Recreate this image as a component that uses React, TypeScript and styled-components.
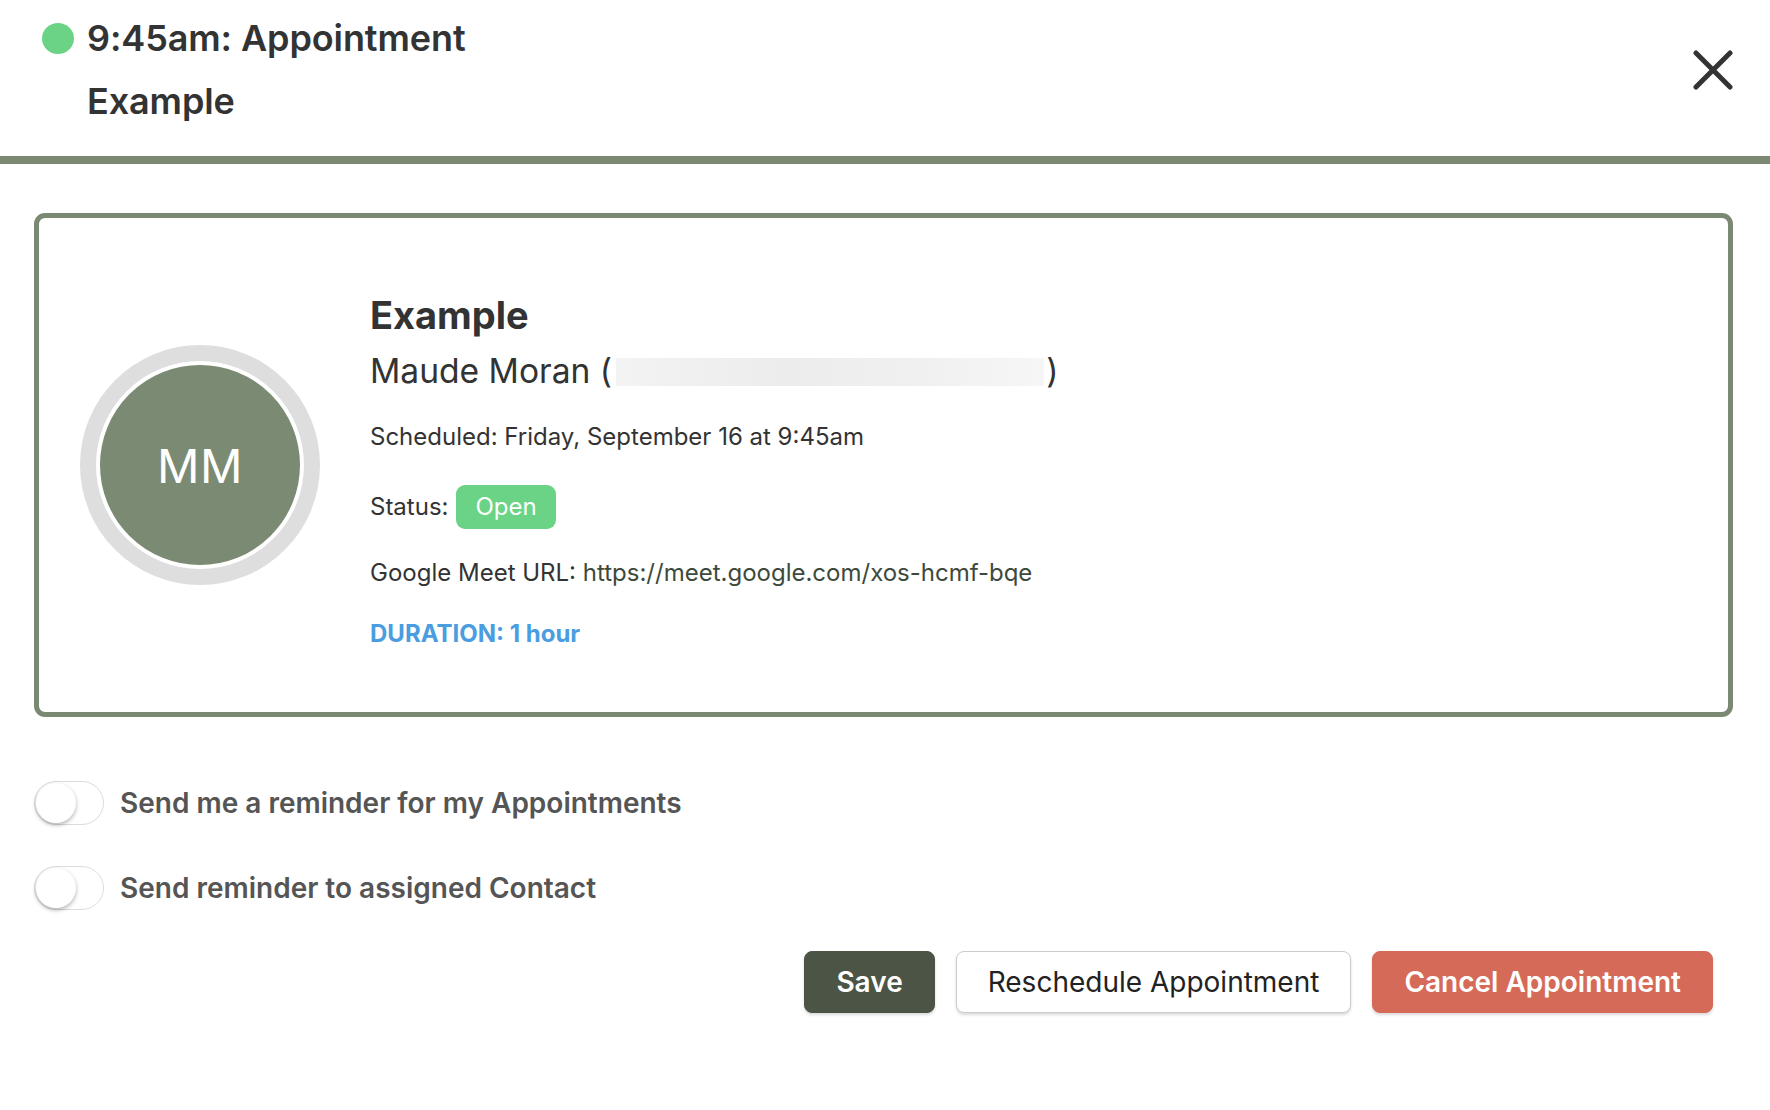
import React from "react";
import styled, { createGlobalStyle } from "styled-components";

const GlobalStyle = createGlobalStyle`
  html, body {
    margin: 0;
    padding: 0;
    background: #ffffff;
  }
  body {
    font-family: Inter, "Noto Sans", "Liberation Sans", sans-serif;
    color: #333333;
  }
`;

const sage = "#7b8872";

export default function App() {
  const [remindMe, setRemindMe] = React.useState(false);
  const [remindContact, setRemindContact] = React.useState(false);

  return (
    <>
      <GlobalStyle />
      <Page>
        <Header>
          <TitleRow>
            <StatusDot />
            <Title>
              9:45am: Appointment
              <br />
              Example
            </Title>
          </TitleRow>
          <CloseButton aria-label="Close">
            <svg width="40" height="40" viewBox="0 0 40 40" fill="none">
              <path
                d="M3 3L37 37M37 3L3 37"
                stroke="#333"
                strokeWidth="5"
                strokeLinecap="round"
              />
            </svg>
          </CloseButton>
        </Header>
        <Divider />

        <Body>
          <Card>
            <AvatarRing>
              <Avatar>MM</Avatar>
            </AvatarRing>
            <Details>
              <CardTitle>Example</CardTitle>
              <ContactName>
                Maude Moran (<Redacted />)
              </ContactName>
              <InfoLine $gap={31}>Scheduled: Friday, September 16 at 9:45am</InfoLine>
              <StatusRow>
                Status: <Badge>Open</Badge>
              </StatusRow>
              <InfoLine $gap={29}>
                Google Meet URL:{" "}
                <MeetLink href="#">https://meet.google.com/xos-hcmf-bqe</MeetLink>
              </InfoLine>
              <Duration>DURATION: 1 hour</Duration>
            </Details>
          </Card>

          <Options>
            <OptionRow>
              <Toggle $on={remindMe} onClick={() => setRemindMe(!remindMe)}>
                <Knob $on={remindMe} />
              </Toggle>
              <OptionLabel>Send me a reminder for my Appointments</OptionLabel>
            </OptionRow>
            <OptionRow>
              <Toggle $on={remindContact} onClick={() => setRemindContact(!remindContact)}>
                <Knob $on={remindContact} />
              </Toggle>
              <OptionLabel>Send reminder to assigned Contact</OptionLabel>
            </OptionRow>
          </Options>

          <Actions>
            <ActionButton $variant="primary">Save</ActionButton>
            <ActionButton $variant="outline">Reschedule Appointment</ActionButton>
            <ActionButton $variant="danger">Cancel Appointment</ActionButton>
          </Actions>
        </Body>
      </Page>
    </>
  );
}

const Page = styled.div`
  width: 1770px;
  min-height: 1110px;
  background: #fff;
`;

const Header = styled.header`
  display: flex;
  justify-content: space-between;
  align-items: flex-start;
  padding: 7px 37px 23px 42px;
`;

const TitleRow = styled.div`
  display: flex;
  align-items: flex-start;
  gap: 13px;
`;

const StatusDot = styled.span`
  flex: none;
  width: 32px;
  height: 31px;
  margin-top: 16px;
  border-radius: 50%;
  background: #6bd386;
`;

const Title = styled.h1`
  margin: 0;
  font-size: 36px;
  line-height: 63px;
  font-weight: 600;
  color: #333;
  letter-spacing: -0.1px;
`;

const CloseButton = styled.button`
  margin-top: 43px;
  padding: 0;
  border: none;
  background: none;
  cursor: pointer;
  display: flex;
`;

const Divider = styled.div`
  height: 8px;
  background: ${sage};
`;

const Body = styled.main`
  padding: 49px 37px 0 34px;
`;

const Card = styled.section`
  display: flex;
  align-items: center;
  gap: 50px;
  padding: 75px 40px 63px 41px;
  border: 5px solid ${sage};
  border-radius: 11px;
`;

const AvatarRing = styled.div`
  flex: none;
  width: 240px;
  height: 240px;
  margin-bottom: 12px;
  border-radius: 50%;
  background: #dedede;
  display: flex;
  align-items: center;
  justify-content: center;
`;

const Avatar = styled.div`
  width: 200px;
  height: 200px;
  border-radius: 50%;
  border: 4px solid #fff;
  background: #7b8a72;
  color: #fff;
  font-size: 47px;
  display: flex;
  align-items: center;
  justify-content: center;
  letter-spacing: 0.5px;
`;

const Details = styled.div`
  display: flex;
  flex-direction: column;
  align-items: flex-start;
`;

const CardTitle = styled.h2`
  margin: 0;
  font-size: 38px;
  line-height: 44px;
  font-weight: 700;
  color: #333;
`;

const ContactName = styled.div`
  margin-top: 14px;
  display: flex;
  align-items: center;
  font-size: 33.6px;
  line-height: 40px;
  color: #333;
`;

const Redacted = styled.span`
  display: inline-block;
  width: 428px;
  height: 28px;
  margin: 2px 2px 0 4px;
  background: linear-gradient(90deg, #f3f3f3 0%, #ececec 40%, #f0f0f0 70%, #f6f6f6 100%);
`;

const InfoLine = styled.div<{ $gap: number }>`
  margin-top: ${(p) => p.$gap}px;
  font-size: 24px;
  line-height: 30px;
  color: #333;
`;

const StatusRow = styled.div`
  margin-top: 33px;
  display: flex;
  align-items: center;
  gap: 8px;
  font-size: 24px;
  line-height: 30px;
  color: #333;
`;

const Badge = styled.span`
  display: inline-flex;
  align-items: center;
  height: 44px;
  padding: 0 19px;
  border-radius: 9px;
  background: #6bd386;
  color: #fff;
  font-size: 24px;
`;

const MeetLink = styled.a`
  color: #3d4a3b;
  text-decoration: none;
`;

const Duration = styled.div`
  margin-top: 31px;
  font-size: 24px;
  line-height: 30px;
  font-weight: 700;
  color: #4a9de0;
`;

const Options = styled.div`
  display: flex;
  flex-direction: column;
  gap: 41px;
  margin-top: 64px;
`;

const OptionRow = styled.div`
  display: flex;
  align-items: center;
  gap: 16px;
`;

const Toggle = styled.button<{ $on: boolean }>`
  position: relative;
  width: 70px;
  height: 44px;
  padding: 0;
  border-radius: 22px;
  border: 1px solid #dcdcdc;
  background: ${(p) => (p.$on ? "#6bd386" : "#fff")};
  cursor: pointer;
`;

const Knob = styled.span<{ $on: boolean }>`
  position: absolute;
  top: 1px;
  left: ${(p) => (p.$on ? "27px" : "1px")};
  width: 40px;
  height: 40px;
  border-radius: 50%;
  background: #fff;
  box-shadow: 0 2px 4px rgba(0, 0, 0, 0.3);
`;

const OptionLabel = styled.span`
  font-size: 28px;
  font-weight: 600;
  color: #555;
`;

const Actions = styled.div`
  display: flex;
  justify-content: flex-end;
  gap: 21px;
  margin-top: 41px;
  padding-right: 20px;
`;

const variants = {
  primary: { bg: "#4b5445", color: "#fff", border: "#4b5445", weight: 600 },
  outline: { bg: "#fff", color: "#222", border: "#cccccc", weight: 400 },
  danger: { bg: "#d66a58", color: "#fff", border: "#d66a58", weight: 600 },
};

const ActionButton = styled.button<{ $variant: keyof typeof variants }>`
  height: 62px;
  padding: 0 31px;
  border-radius: 8px;
  border: 1px solid ${(p) => variants[p.$variant].border};
  background: ${(p) => variants[p.$variant].bg};
  color: ${(p) => variants[p.$variant].color};
  font-family: inherit;
  font-size: 28px;
  font-weight: ${(p) => variants[p.$variant].weight};
  box-shadow: 0 2px 3px rgba(0, 0, 0, 0.15);
  cursor: pointer;
`;
